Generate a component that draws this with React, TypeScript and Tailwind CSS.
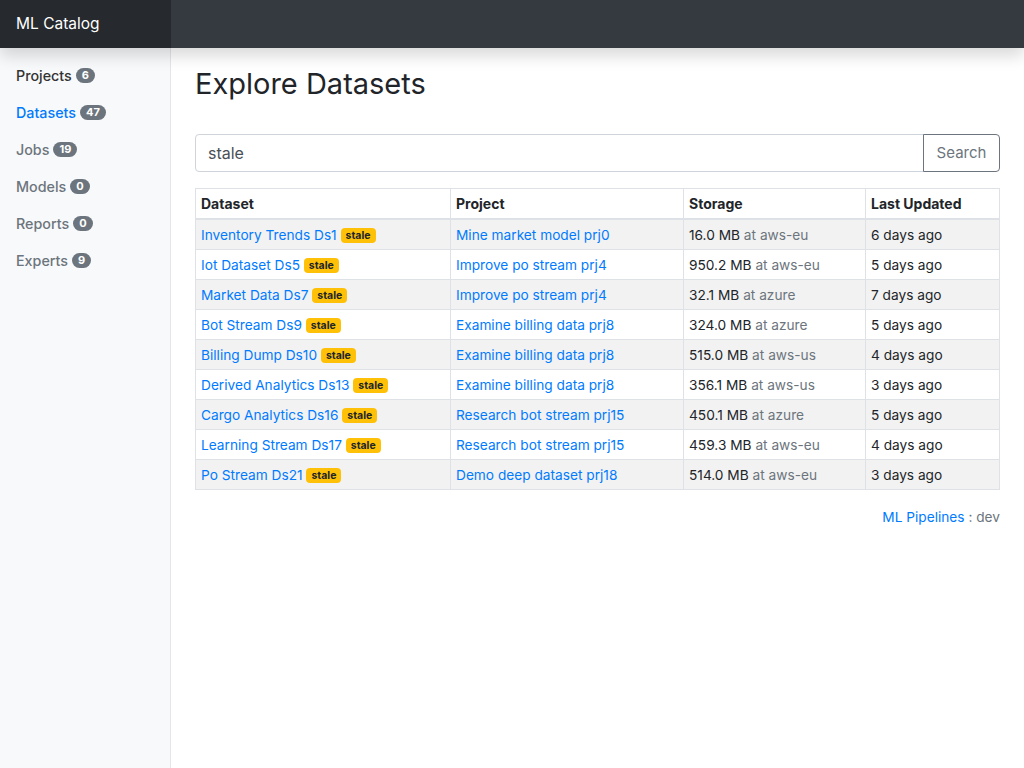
const navItems = [
  { label: 'Projects', count: 6, active: false },
  { label: 'Datasets', count: 47, active: true },
  { label: 'Jobs', count: 19, active: false },
  { label: 'Models', count: 0, active: false },
  { label: 'Reports', count: 0, active: false },
  { label: 'Experts', count: 9, active: false },
]

const rows = [
  ['Inventory Trends Ds1', 'Mine market model prj0', '16.0 MB', 'aws-eu', '6 days ago'],
  ['Iot Dataset Ds5', 'Improve po stream prj4', '950.2 MB', 'aws-eu', '5 days ago'],
  ['Market Data Ds7', 'Improve po stream prj4', '32.1 MB', 'azure', '7 days ago'],
  ['Bot Stream Ds9', 'Examine billing data prj8', '324.0 MB', 'azure', '5 days ago'],
  ['Billing Dump Ds10', 'Examine billing data prj8', '515.0 MB', 'aws-us', '4 days ago'],
  ['Derived Analytics Ds13', 'Examine billing data prj8', '356.1 MB', 'aws-us', '3 days ago'],
  ['Cargo Analytics Ds16', 'Research bot stream prj15', '450.1 MB', 'azure', '5 days ago'],
  ['Learning Stream Ds17', 'Research bot stream prj15', '459.3 MB', 'aws-eu', '4 days ago'],
  ['Po Stream Ds21', 'Demo deep dataset prj18', '514.0 MB', 'aws-eu', '3 days ago'],
]

export default function App() {
  return (
    <div className="min-h-screen bg-white text-[#212529] font-['Inter',sans-serif]">
      <header className="flex h-12 bg-[#343a40] shadow-[0_8px_16px_rgba(0,0,0,0.15)] relative z-10">
        <div className="w-[171px] flex items-center px-4 bg-[#26292d] text-white text-[15.5px]">
          ML Catalog
        </div>
      </header>
      <div className="flex min-h-[720px]">
        <nav className="w-[171px] shrink-0 bg-[#f8f9fa] border-r border-[#e3e5e8] pt-[9px]">
          {navItems.map((n) => (
            <div
              key={n.label}
              className={`flex items-center gap-1 px-4 py-2 text-[14.3px] leading-[21px] font-medium ${
                n.active ? 'text-[#007bff]' : n.label === 'Projects' ? 'text-[#333]' : 'text-[#6c757d]'
              }`}
            >
              {n.label}
              <span className="rounded-full bg-[#6c757d] px-[6px] text-[11px] leading-[15px] font-bold text-white">
                {n.count}
              </span>
            </div>
          ))}
        </nav>
        <main className="flex-1 px-6 pt-[18px]">
          <h1 className="text-[29px] leading-[36px] font-normal mb-[32px]">Explore Datasets</h1>
          <div className="flex h-[38px] mb-4">
            <div className="flex-1 flex items-center border border-[#ced4da] rounded-l px-3 text-[16px] text-[#495057]">
              stale
            </div>
            <button className="w-[77px] border border-[#6c757d] rounded-r text-[15px] text-[#6c757d] -ml-px">
              Search
            </button>
          </div>
          <table className="w-full border-collapse border border-[#dee2e6] text-[13.7px] leading-[21px]">
            <thead>
              <tr className="text-[14px]">
                <th className="w-[255px] text-left font-bold px-[5px] py-[4px] border border-[#dee2e6] border-b-2">Dataset</th>
                <th className="w-[233px] text-left font-bold px-[5px] py-[4px] border border-[#dee2e6] border-b-2">Project</th>
                <th className="w-[182px] text-left font-bold px-[5px] py-[4px] border border-[#dee2e6] border-b-2">Storage</th>
                <th className="text-left font-bold px-[5px] py-[4px] border border-[#dee2e6] border-b-2">Last Updated</th>
              </tr>
            </thead>
            <tbody>
              {rows.map((r, i) => (
                <tr key={r[0]} className={i % 2 === 0 ? 'bg-[#f2f2f2]' : 'bg-white'}>
                  <td className="px-[5px] pt-[5px] pb-[3px] border border-[#dee2e6]">
                    <span className="text-[#007bff]">{r[0]}</span>{' '}
                    <span className="inline-block rounded-[4px] bg-[#ffc107] px-[5px] text-[10.5px] leading-[15px] font-bold text-[#212529] align-[1px]">
                      stale
                    </span>
                  </td>
                  <td className="px-[5px] pt-[5px] pb-[3px] border border-[#dee2e6] text-[#007bff]">{r[1]}</td>
                  <td className="px-[5px] pt-[5px] pb-[3px] border border-[#dee2e6]">
                    {r[2]} <span className="text-[#6c757d]">at {r[3]}</span>
                  </td>
                  <td className="px-[5px] pt-[5px] pb-[3px] border border-[#dee2e6]">{r[4]}</td>
                </tr>
              ))}
            </tbody>
          </table>
          <div className="text-right mt-[17px] text-[13.7px] text-[#6c757d]">
            <span className="text-[#007bff]">ML Pipelines</span> : dev
          </div>
        </main>
      </div>
    </div>
  )
}
